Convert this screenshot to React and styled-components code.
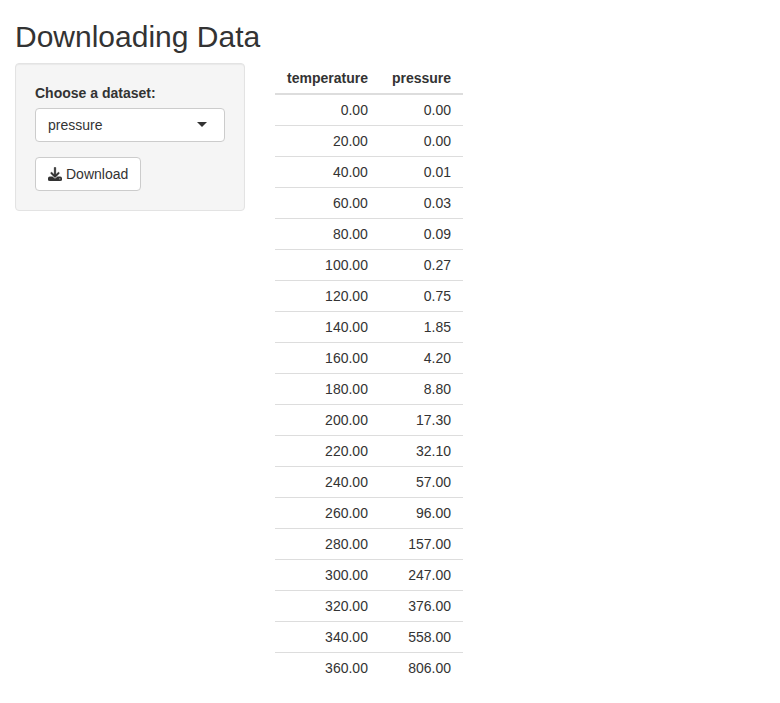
import React from "react";
import styled, { createGlobalStyle } from "styled-components";
import { FaDownload } from "react-icons/fa6";

const GlobalStyle = createGlobalStyle`
  *, *::before, *::after { box-sizing: border-box; }
  body {
    margin: 0;
    font-family: "Liberation Sans", Arial, sans-serif;
    font-size: 14px;
    line-height: 20px;
    color: #333;
    background: #fff;
  }
`;

const Container = styled.main`
  padding: 0 15px;
`;

const Title = styled.h2`
  margin: 20px 0 10px;
  font-size: 30px;
  font-weight: 500;
  line-height: 33px;
`;

const Row = styled.div`
  display: flex;
  align-items: flex-start;
  gap: 30px;
`;

const Well = styled.form`
  width: 230px;
  min-height: 20px;
  padding: 19px;
  background: #f5f5f5;
  border: 1px solid #e3e3e3;
  border-radius: 4px;
  box-shadow: inset 0 1px 1px rgba(0, 0, 0, 0.05);
`;

const Label = styled.label`
  display: block;
  margin-bottom: 5px;
  font-weight: 700;
`;

const Select = styled.button`
  display: flex;
  align-items: center;
  justify-content: space-between;
  width: 100%;
  height: 34px;
  margin-bottom: 15px;
  padding: 6px 17px 6px 12px;
  font: inherit;
  color: inherit;
  background: #fff;
  border: 1px solid #ccc;
  border-radius: 4px;
`;

const Caret = styled.span`
  margin-bottom: 2px;
  border: 5px solid transparent;
  border-top-color: #333;
  border-bottom: 0;
`;

const Button = styled.button`
  display: inline-flex;
  align-items: center;
  gap: 4px;
  height: 34px;
  padding: 6px 12px;
  font: inherit;
  color: #333;
  background: #fff;
  border: 1px solid #ccc;
  border-radius: 4px;
`;

const DownloadIcon = styled(FaDownload)`
  width: 14px;
  height: 14px;
  stroke-width: 12px;
`;

const Table = styled.table`
  border-collapse: collapse;
  border-spacing: 0;
`;

const Th = styled.th`
  padding: 5px 12px;
  text-align: right;
  border-bottom: 2px solid #ddd;
`;

const Td = styled.td`
  padding: 5px 12px;
  text-align: right;
  border-top: 1px solid #ddd;
`;

const pressures = [
  "0.00", "0.00", "0.01", "0.03", "0.09", "0.27", "0.75", "1.85", "4.20", "8.80",
  "17.30", "32.10", "57.00", "96.00", "157.00", "247.00", "376.00", "558.00", "806.00",
];

export default function App() {
  return (
    <>
      <GlobalStyle />
      <Container>
        <Title>Downloading Data</Title>
        <Row>
          <Well>
            <Label>Choose a dataset:</Label>
            <Select type="button">
              pressure
              <Caret />
            </Select>
            <Button type="button">
              <DownloadIcon />
              Download
            </Button>
          </Well>
          <Table>
            <thead>
              <tr>
                <Th>temperature</Th>
                <Th>pressure</Th>
              </tr>
            </thead>
            <tbody>
              {pressures.map((value, i) => (
                <tr key={i}>
                  <Td>{(i * 20).toFixed(2)}</Td>
                  <Td>{value}</Td>
                </tr>
              ))}
            </tbody>
          </Table>
        </Row>
      </Container>
    </>
  );
}
